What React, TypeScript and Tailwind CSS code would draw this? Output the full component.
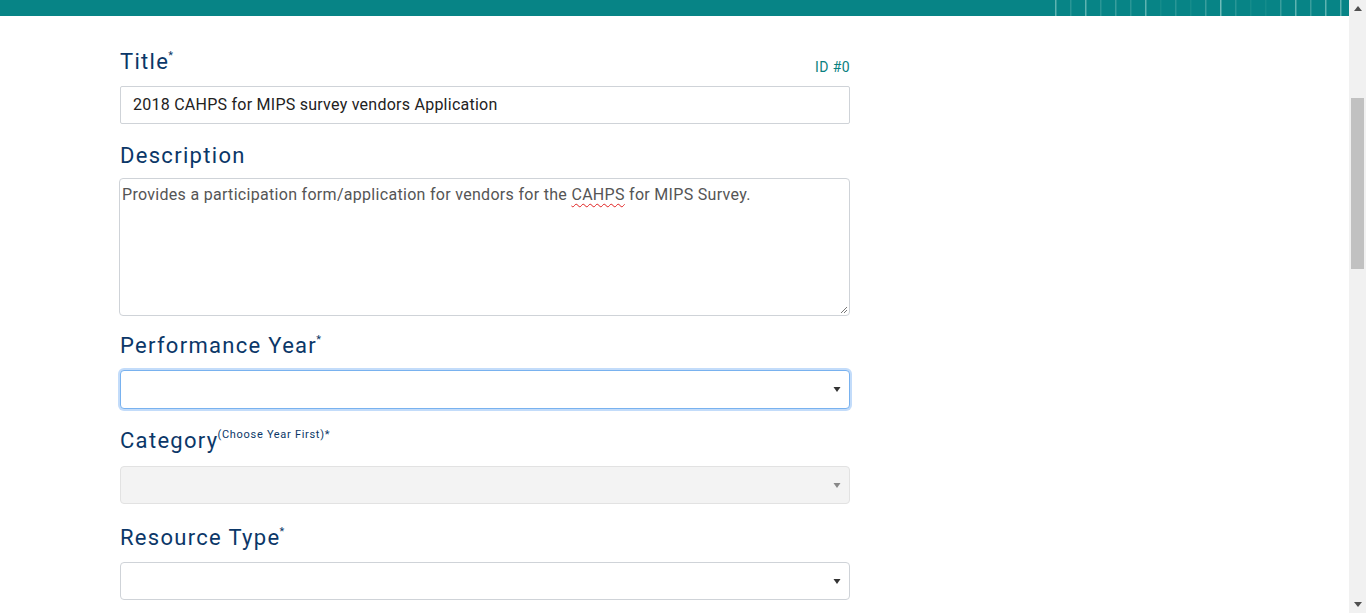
import React from "react";

const lineColors = [
  "#5fb3b1", "#2a9696", "#5fb3b1", "#2a9696", "#3a9e9d", "#2a9696", "#5fb3b1", "#158c8b",
  "#2a9696", "#158c8b", "#3a9e9d", "#70bcba", "#2a9696", "#158c8b", "#158c8b", "#3a9e9d",
  "#5fb3b1", "#3a9e9d", "#5fb3b1", "#5fb3b1",
];

function HeaderLines() {
  return (
    <svg width="300" height="16" className="block">
      {lineColors.map((c, i) => (
        <rect key={i} x={i * 15} y={0} width={1.5} height={16} fill={c} />
      ))}
    </svg>
  );
}

function Arrow({ color = "#333" }: { color?: string }) {
  return (
    <svg width="8" height="7" viewBox="0 0 8 7" className="block">
      <path d="M0.5 1 L7.5 1 L4 6 Z" fill={color} />
    </svg>
  );
}

function Label({ children, sup = "*" }: { children: React.ReactNode; sup?: string }) {
  return (
    <div className="h-[32px] leading-[32px] text-[22px] tracking-[1.3px] text-[#0b3768] flex items-start">
      <span>{children}</span>
      {sup && (
        <span className="text-[11px] leading-[11px] mt-[4px] -ml-[1px] tracking-[0.7px] text-[#0b3768]">{sup}</span>
      )}
    </div>
  );
}

function Select({ focused = false, disabled = false }: { focused?: boolean; disabled?: boolean }) {
  const cls = focused
    ? "border border-[#79b2ef] shadow-[0_0_0_2px_#c3dcfa] bg-white h-[39px]"
    : disabled
    ? "border border-[#e2e2e2] bg-[#f3f3f3] h-[38px]"
    : "border border-[#cfd3d8] bg-white h-[38px]";
  return (
    <div className={`${cls} rounded-[4px] w-[730px] flex items-center justify-end pr-[8px]`}>
      <Arrow color={disabled ? "#888" : "#333"} />
    </div>
  );
}

export default function App() {
  return (
    <div className="w-[1366px] h-[613px] overflow-hidden flex bg-white" style={{ fontFamily: "Roboto, 'Noto Sans', sans-serif" }}>
      <div className="w-[1349px] flex flex-col">
        <div className="h-[16px] bg-[#078486] flex justify-end">
          <div className="w-[294px] flex">
            <HeaderLines />
          </div>
        </div>
        <div className="pl-[120px] w-[850px]">
          <div className="mt-[30px] flex items-start justify-between">
            <Label>Title</Label>
            <span className="mt-[11px] text-[14px] text-[#0a7f80] tracking-[0.4px]">ID #0</span>
          </div>
          <div className="mt-[8px] h-[38px] border border-[#cfd3d8] rounded-[2px] flex items-center pl-[12px] text-[16px] tracking-[0.25px] text-[#222]">
            2018 CAHPS for MIPS survey vendors Application
          </div>

          <div className="mt-[16px]">
            <Label sup="">Description</Label>
          </div>
          <div className="mt-[6px] -ml-[1px] h-[138px] border border-[#cfd3d8] rounded-[4px] relative px-[2px] pt-[4px] text-[16px] tracking-[0.3px] text-[#555]">
            Provides a participation form/application for vendors for the{" "}
            <span className="underline decoration-wavy decoration-[#e02020] decoration-1 underline-offset-[3px]">CAHPS</span>{" "}
            for MIPS Survey.
            <svg width="9" height="9" viewBox="0 0 9 9" className="absolute right-[1px] bottom-[1px]">
              <path d="M8 2 L2 8 M8 5 L5 8" stroke="#777" strokeWidth="1" />
            </svg>
          </div>

          <div className="mt-[14px]">
            <Label>Performance Year</Label>
          </div>
          <div className="mt-[8px]">
            <Select focused />
          </div>

          <div className="mt-[16px]">
            <Label sup="(Choose Year First)*">Category</Label>
          </div>
          <div className="mt-[9px]">
            <Select disabled />
          </div>

          <div className="mt-[18px]">
            <Label>Resource Type</Label>
          </div>
          <div className="mt-[8px]">
            <Select />
          </div>
        </div>
      </div>
      <div className="w-[17px] h-[613px] bg-[#f1f1f1] flex flex-col items-center">
        <div className="h-[17px] flex items-center justify-center">
          <svg width="8" height="5" viewBox="0 0 8 5"><path d="M0 5 L4 0 L8 5 Z" fill="#505050" /></svg>
        </div>
        <div className="mt-[81px] w-[13px] h-[171px] bg-[#c1c1c1]" />
        <div className="flex-1" />
        <div className="h-[17px] flex items-center justify-center">
          <svg width="8" height="5" viewBox="0 0 8 5"><path d="M0 0 L4 5 L8 0 Z" fill="#505050" /></svg>
        </div>
      </div>
    </div>
  );
}
